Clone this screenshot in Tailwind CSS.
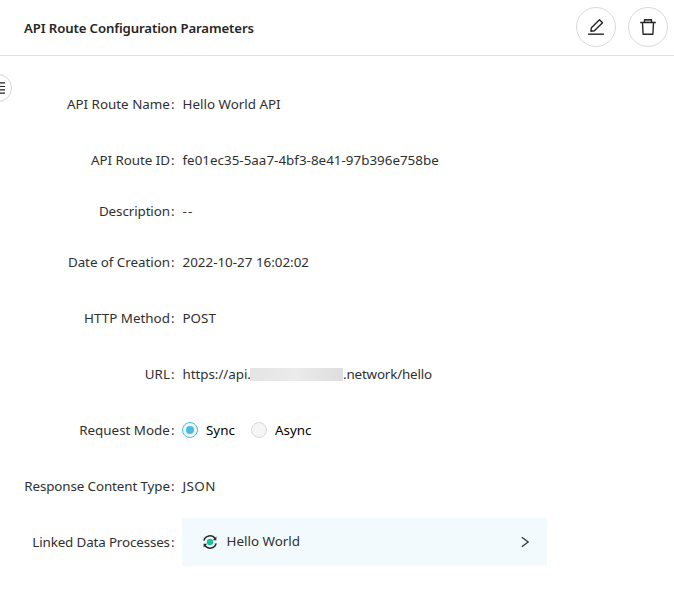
<!DOCTYPE html>
<html lang="en">
<head>
<meta charset="utf-8">
<title>API Route Configuration Parameters</title>
<script src="https://cdn.jsdelivr.net/npm/@tailwindcss/browser@4"></script>
</head>
<body class="relative h-[597px] w-[674px] overflow-hidden bg-white font-['Noto_Sans','Open_Sans',sans-serif] text-[13.4px] leading-5 text-[#303030]">
<header class="flex h-14 items-center justify-between border-b border-[#e2e2e2] pl-6 pr-1.5">
  <h1 class="text-[13.2px] font-semibold tracking-[-0.12px] whitespace-nowrap text-[#262626]">API Route Configuration Parameters</h1>
  <div class="mb-0.5 flex gap-3">
    <button aria-label="Edit" class="flex size-10 items-center justify-center rounded-full border border-[#d9d9d9] bg-white">
      <svg class="size-5" viewBox="0 0 20 20" fill="none" stroke="#262626" stroke-width="1.4"><path d="M2 17.2h16"/><path d="M4.9 14.2l.5-3.5 8.1-7.9 3 3-8.1 7.9z" stroke-linejoin="round"/></svg>
    </button>
    <button aria-label="Delete" class="flex size-10 items-center justify-center rounded-full border border-[#d9d9d9] bg-white">
      <svg class="size-5" viewBox="0 0 20 20" fill="none" stroke="#262626" stroke-width="1.4"><path d="M6.5 5.5V2.7h7v2.8" fill="#cfcfcf" stroke-linejoin="round"/><path d="M2.2 5.5h15.6M4.5 5.5l.6 11.7h9.8l.6-11.7" stroke-linejoin="round"/></svg>
    </button>
  </div>
</header>
<button aria-label="Toggle menu" class="absolute top-[74px] -left-4 flex size-7 items-center justify-end rounded-full border border-[#d4d4d4] bg-white pr-1.5">
  <svg class="h-3 w-3" viewBox="0 0 12 12" stroke="#222" stroke-width="1.2"><path d="M0 .9h12M0 4.5h12M0 7.8h12M0 11.2h12"/></svg>
</button>
<main class="pt-5">
  <dl class="whitespace-nowrap">
    <div class="flex h-14 items-center"><dt class="flex w-[182.5px] justify-end pr-2"><span>API Route Name</span><span class="ml-px">:</span></dt><dd>Hello World API</dd></div>
    <div class="flex h-14 items-center"><dt class="flex w-[182.5px] justify-end pr-2"><span class="tracking-[-0.05px]">API Route ID</span><span class="ml-px">:</span></dt><dd class="tracking-[0.01px]">fe01ec35-5aa7-4bf3-8e41-97b396e758be</dd></div>
    <div class="flex h-[46px] items-center"><dt class="flex w-[182.5px] justify-end pr-2"><span class="tracking-[-0.1px]">Description</span><span class="ml-px">:</span></dt><dd class="tracking-[1.2px]">--</dd></div>
    <div class="flex h-14 items-center"><dt class="flex w-[182.5px] justify-end pr-2"><span class="tracking-[-0.05px]">Date of Creation</span><span class="ml-px">:</span></dt><dd>2022-10-27 16:02:02</dd></div>
    <div class="flex h-14 items-center"><dt class="flex w-[182.5px] justify-end pr-2"><span>HTTP Method</span><span class="ml-px">:</span></dt><dd>POST</dd></div>
    <div class="flex h-14 items-center"><dt class="flex w-[182.5px] justify-end pr-2"><span>URL</span><span class="ml-px">:</span></dt><dd class="flex items-center"><span class="w-[67.5px] tracking-[-0.05px]">https://api.</span><span class="h-[13px] w-[93px] bg-gradient-to-r from-[#e4e4e4] via-[#ebebeb] to-[#dedede]"></span><span class="tracking-[-0.17px]">.network/hello</span></dd></div>
    <div class="flex h-14 items-center"><dt class="flex w-[182px] justify-end pr-[7.5px]"><span>Request Mode</span><span class="ml-px">:</span></dt><dd class="flex items-center text-black"><span class="flex size-4 items-center justify-center rounded-full border border-[#45bce2] bg-[#f5f5f5]"><span class="size-2 rounded-full bg-[#45bce2]"></span></span><span class="ml-2 w-[45px]">Sync</span><span class="size-4 rounded-full border border-[#d9d9d9] bg-[#f5f5f5]"></span><span class="ml-2">Async</span></dd></div>
    <div class="flex h-14 items-center"><dt class="flex w-[182.5px] justify-end pr-2"><span class="tracking-[-0.11px]">Response Content Type</span><span class="ml-px">:</span></dt><dd class="tracking-[0.4px]">JSON</dd></div>
    <div class="flex h-14 items-center"><dt class="flex w-[182px] justify-end pr-[7.5px]"><span class="tracking-[-0.14px]">Linked Data Processes</span><span class="ml-px">:</span></dt>
      <dd class="flex h-12 w-[365px] items-center bg-[#f2fafd] pr-[15px] pl-[20px]">
        <svg class="size-4" viewBox="0 0 16 16" fill="none" stroke="#2b2b2b" stroke-width="1.6"><path d="M1.9 6.6a6.2 6.2 0 0 1 11.2-2M14.1 9.4a6.2 6.2 0 0 1-11.2 2"/><path d="M14.4 2.6v3.6h-3.6zM1.6 13.4V9.8h3.6z" fill="#2b2b2b" stroke="none"/><circle cx="8" cy="8" r="3.2" fill="#14c39a" stroke="none"/></svg>
        <span class="mb-0.5 ml-[8.5px]">Hello World</span>
        <svg class="ml-auto h-3.5 w-3.5" viewBox="0 0 14 14" fill="none" stroke="#333" stroke-width="1.3"><path d="M3.8 2.2l6.4 4.8-6.4 4.8"/></svg>
      </dd></div>
  </dl>
</main>
</body>
</html>
